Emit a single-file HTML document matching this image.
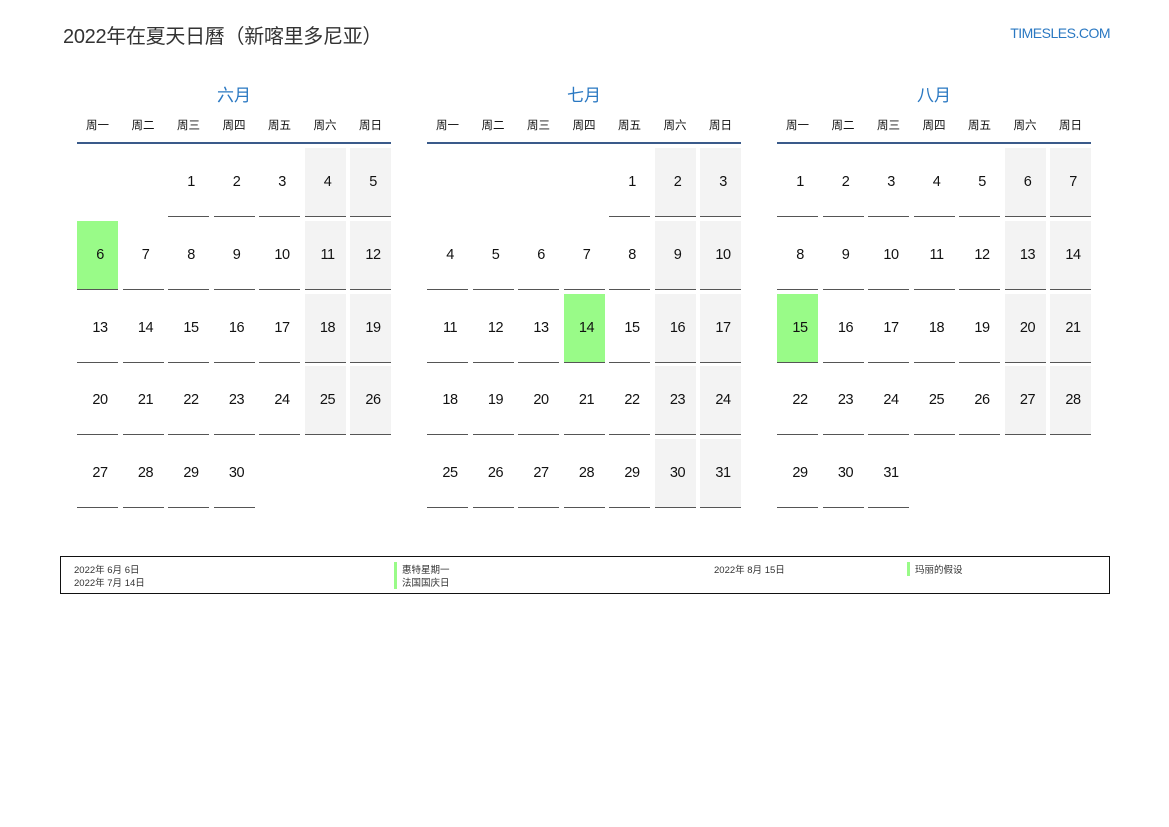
<!DOCTYPE html>
<html><head><meta charset="utf-8"><style>
body{margin:0;width:1169px;height:827px;background:#fff;font-family:"Liberation Sans","Noto Sans CJK SC",sans-serif;position:relative;overflow:hidden}
.title{position:absolute;left:63px;top:20px;font-size:20px;color:#333;letter-spacing:-0.3px}
.site{position:absolute;right:59px;top:25px;font-size:14px;color:#2a78c2;letter-spacing:-0.5px}
.m{position:absolute;top:84px;width:314px}
.mt{text-align:center;font-size:17px;color:#2a78c2;height:24px;line-height:24px}
.wd{display:grid;grid-template-columns:repeat(7,41px);column-gap:4.5px;font-size:11.5px;text-align:center;color:#111;height:34px;line-height:37px;border-bottom:2px solid #3a5a8a}
.g{display:grid;grid-template-columns:repeat(7,41px);column-gap:4.5px;row-gap:3.8px;grid-auto-rows:69px;margin-top:4px}
.g div{border-bottom:1px solid #555;display:flex;align-items:center;justify-content:center;font-size:14.5px;color:#111;padding-left:5px;box-sizing:border-box;letter-spacing:-0.5px}
.g div.e{border:none}
.g div.w{background:#f3f3f3}
.g div.h{background:#99fb88}
.leg{position:absolute;left:60px;top:556px;width:1048px;height:36px;border:1px solid #111;font-size:9.5px;color:#333}
.leg span{position:absolute;white-space:nowrap}
.bar{border-left:3px solid #99fb88;padding-left:5px}
</style></head><body>
<div class="title">2022年在夏天日曆（新喀里多尼亚）</div>
<div class="site">TIMESLES.COM</div>

<div class="m" style="left:77px">
<div class="mt">六月</div>
<div class="wd"><span>周一</span><span>周二</span><span>周三</span><span>周四</span><span>周五</span><span>周六</span><span>周日</span></div>
<div class="g">
<div class="e"></div><div class="e"></div><div>1</div><div>2</div><div>3</div><div class="w">4</div><div class="w">5</div>
<div class="h">6</div><div>7</div><div>8</div><div>9</div><div>10</div><div class="w">11</div><div class="w">12</div>
<div>13</div><div>14</div><div>15</div><div>16</div><div>17</div><div class="w">18</div><div class="w">19</div>
<div>20</div><div>21</div><div>22</div><div>23</div><div>24</div><div class="w">25</div><div class="w">26</div>
<div>27</div><div>28</div><div>29</div><div>30</div>
</div></div>

<div class="m" style="left:427px">
<div class="mt">七月</div>
<div class="wd"><span>周一</span><span>周二</span><span>周三</span><span>周四</span><span>周五</span><span>周六</span><span>周日</span></div>
<div class="g">
<div class="e"></div><div class="e"></div><div class="e"></div><div class="e"></div><div>1</div><div class="w">2</div><div class="w">3</div>
<div>4</div><div>5</div><div>6</div><div>7</div><div>8</div><div class="w">9</div><div class="w">10</div>
<div>11</div><div>12</div><div>13</div><div class="h">14</div><div>15</div><div class="w">16</div><div class="w">17</div>
<div>18</div><div>19</div><div>20</div><div>21</div><div>22</div><div class="w">23</div><div class="w">24</div>
<div>25</div><div>26</div><div>27</div><div>28</div><div>29</div><div class="w">30</div><div class="w">31</div>
</div></div>

<div class="m" style="left:777px">
<div class="mt">八月</div>
<div class="wd"><span>周一</span><span>周二</span><span>周三</span><span>周四</span><span>周五</span><span>周六</span><span>周日</span></div>
<div class="g">
<div>1</div><div>2</div><div>3</div><div>4</div><div>5</div><div class="w">6</div><div class="w">7</div>
<div>8</div><div>9</div><div>10</div><div>11</div><div>12</div><div class="w">13</div><div class="w">14</div>
<div class="h">15</div><div>16</div><div>17</div><div>18</div><div>19</div><div class="w">20</div><div class="w">21</div>
<div>22</div><div>23</div><div>24</div><div>25</div><div>26</div><div class="w">27</div><div class="w">28</div>
<div>29</div><div>30</div><div>31</div>
</div></div>

<div class="leg">
<span style="left:13px;top:5px">2022年 6月 6日</span>
<span style="left:13px;top:18px">2022年 7月 14日</span>
<span class="bar" style="left:333px;top:5px">惠特星期一</span>
<span class="bar" style="left:333px;top:18px">法国国庆日</span>
<span style="left:653px;top:5px">2022年 8月 15日</span>
<span class="bar" style="left:846px;top:5px">玛丽的假设</span>
</div>
</body></html>
